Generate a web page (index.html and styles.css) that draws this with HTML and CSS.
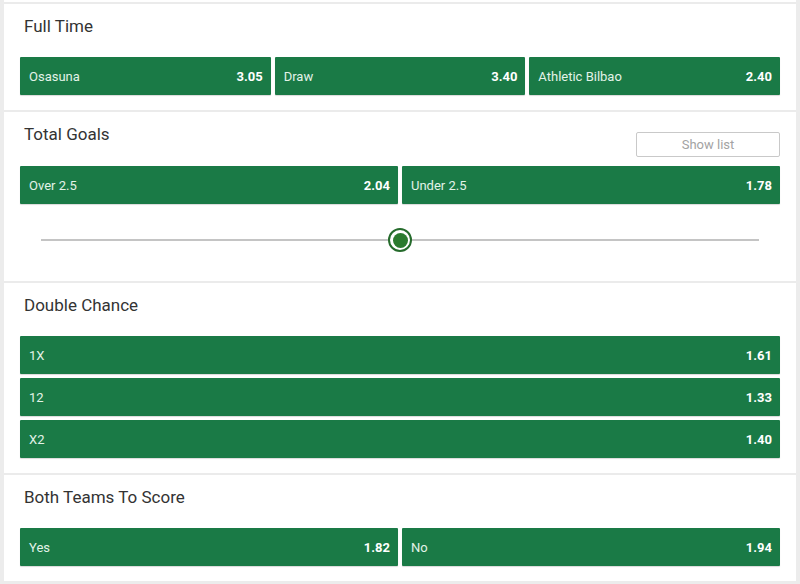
FILE: index.html
```html
<!DOCTYPE html>
<html lang="en">
<head>
    <meta charset="UTF-8">
    <meta name="viewport" content="width=device-width, initial-scale=1.0">
    <title>Osasuna v Athletic Bilbao - Markets</title>
    <link rel="stylesheet" href="styles.css">
</head>
<body>
    <div class="markets">
        <section class="market">
            <h2 class="market-title">Full Time</h2>
            <div class="odds-row">
                <button class="odd"><span class="label">Osasuna</span><span class="price">3.05</span></button>
                <button class="odd"><span class="label">Draw</span><span class="price">3.40</span></button>
                <button class="odd"><span class="label">Athletic Bilbao</span><span class="price">2.40</span></button>
            </div>
        </section>

        <section class="market">
            <div class="market-head">
                <h2 class="market-title">Total Goals</h2>
                <button class="show-list">Show list</button>
            </div>
            <div class="odds-row">
                <button class="odd"><span class="label">Over 2.5</span><span class="price">2.04</span></button>
                <button class="odd"><span class="label">Under 2.5</span><span class="price">1.78</span></button>
            </div>
            <div class="slider">
                <div class="track"></div>
                <div class="knob"></div>
            </div>
        </section>

        <section class="market">
            <h2 class="market-title">Double Chance</h2>
            <div class="odds-list">
                <button class="odd"><span class="label">1X</span><span class="price">1.61</span></button>
                <button class="odd"><span class="label">12</span><span class="price">1.33</span></button>
                <button class="odd"><span class="label">X2</span><span class="price">1.40</span></button>
            </div>
        </section>

        <section class="market">
            <h2 class="market-title">Both Teams To Score</h2>
            <div class="odds-row">
                <button class="odd"><span class="label">Yes</span><span class="price">1.82</span></button>
                <button class="odd"><span class="label">No</span><span class="price">1.94</span></button>
            </div>
        </section>
    </div>
</body>
</html>
```

FILE: styles.css
```css
* {
    margin: 0;
    padding: 0;
    box-sizing: border-box;
    font-family: Roboto, "Liberation Sans", Arial, sans-serif;
}
body {
    background: #ececec;
    height: 100vh;
    overflow: hidden;
}
.markets {
    margin: 0 4px;
    padding-top: 2px;
    background: #fff;
}
.market {
    border-top: 2px solid #ebebeb;
    padding: 12px 16px 15px;
}
.market-title {
    font-size: 17px;
    font-weight: 400;
    line-height: 20px;
    color: #333;
    padding-left: 4px;
    margin-bottom: 21px;
}
.market-head {
    display: flex;
    justify-content: space-between;
    align-items: flex-start;
    margin-bottom: 9px;
}
.market-head .market-title {
    margin-bottom: 0;
}
.show-list {
    margin-top: 8px;
    width: 144px;
    height: 25px;
    background: #fff;
    border: 1px solid #c9c9c9;
    border-radius: 2px;
    color: #a3a3a3;
    font-size: 13px;
}
.odds-row {
    display: flex;
    gap: 4px;
}
.odds-list {
    display: flex;
    flex-direction: column;
    gap: 4px;
}
.odd {
    flex: 1;
    height: 38px;
    display: flex;
    justify-content: space-between;
    align-items: center;
    padding: 0 8px 0 9px;
    background: #1a7a46;
    border: none;
    border-radius: 1px;
    box-shadow: 0 1px 1px rgba(0, 0, 0, 0.15);
    font-size: 13px;
}
.odds-list .odd {
    flex: none;
}
.label {
    color: #e3f3e8;
}
.price {
    color: #fff;
    font-weight: bold;
}
.slider {
    position: relative;
    height: 24px;
    margin: 24px 21px 14px;
}
.track {
    position: absolute;
    left: 0;
    right: 0;
    top: 11px;
    height: 2px;
    background: #c4c4c4;
}
.knob {
    position: absolute;
    left: 50%;
    top: 0;
    width: 24px;
    height: 24px;
    margin-left: -12px;
    border: 2px solid #256b2c;
    border-radius: 50%;
    background: #fff;
    display: flex;
    justify-content: center;
    align-items: center;
}
.knob::after {
    content: "";
    width: 15px;
    height: 15px;
    border-radius: 50%;
    background: #2a7a2e;
}
```
